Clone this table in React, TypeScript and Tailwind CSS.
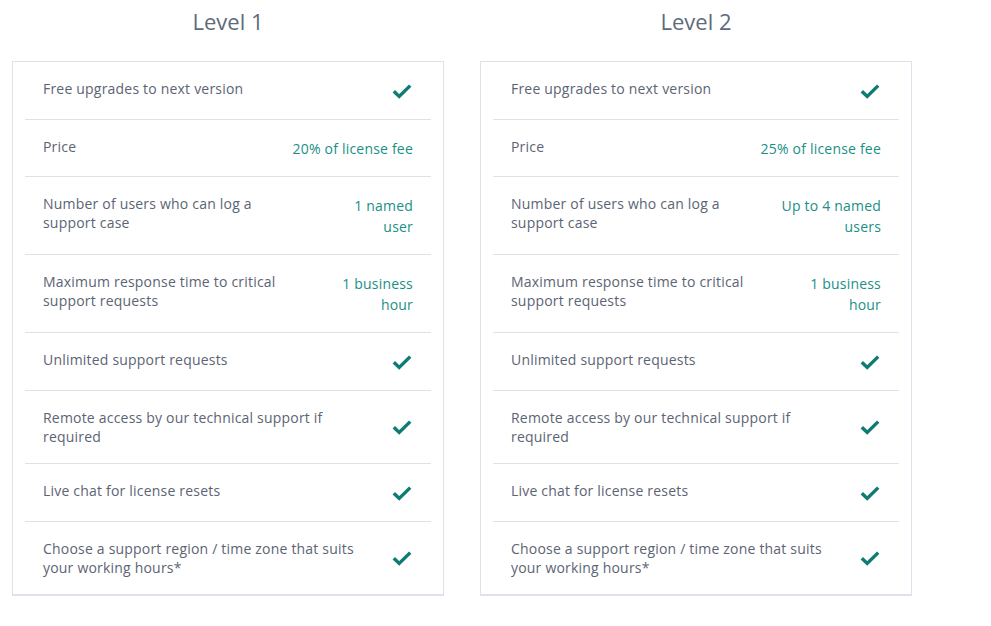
import React from "react";

type Row = {
  label: string[];
  value?: string[];
};

interface Plan {
  title: string;
  rows: Row[];
}

const plans: Plan[] = [
  {
    title: "Level 1",
    rows: [
      { label: ["Free upgrades to next version"] },
      { label: ["Price"], value: ["20% of license fee"] },
      { label: ["Number of users who can log a", "support case"], value: ["1 named", "user"] },
      { label: ["Maximum response time to critical", "support requests"], value: ["1 business", "hour"] },
      { label: ["Unlimited support requests"] },
      { label: ["Remote access by our technical support if", "required"] },
      { label: ["Live chat for license resets"] },
      { label: ["Choose a support region / time zone that suits", "your working hours*"] },
    ],
  },
  {
    title: "Level 2",
    rows: [
      { label: ["Free upgrades to next version"] },
      { label: ["Price"], value: ["25% of license fee"] },
      { label: ["Number of users who can log a", "support case"], value: ["Up to 4 named", "users"] },
      { label: ["Maximum response time to critical", "support requests"], value: ["1 business", "hour"] },
      { label: ["Unlimited support requests"] },
      { label: ["Remote access by our technical support if", "required"] },
      { label: ["Live chat for license resets"] },
      { label: ["Choose a support region / time zone that suits", "your working hours*"] },
    ],
  },
];

const Check = () => (
  <svg width="20" height="15" viewBox="0 0 20 15" fill="none">
    <path
      d="M1.8 7.2 L7.2 12.4 L18.2 1.6"
      stroke="#0e7c72"
      strokeWidth="3.4"
      strokeLinejoin="miter"
    />
  </svg>
);

const PlanCard: React.FC<{ plan: Plan }> = ({ plan }) => {
  return (
    <div className="w-[432px] shrink-0">
      <h2 className="text-center text-[22px] leading-[30px] text-[#5e6b7d] pt-[6px] mb-[25px]">
        {plan.title}
      </h2>
      <div className="border border-[#dfe2ea] border-b-2 bg-white px-3">
        {plan.rows.map((row, i) => (
          <div
            key={i}
            className={
              "flex justify-between gap-6 px-[18px] pt-[18px] pb-[17px] " +
              (i < plan.rows.length - 1 ? "border-b border-[#dde2ea]" : "")
            }
          >
            <div className="text-[14px] leading-[18.5px] tracking-[0.2px] text-[#5c6474]">
              {row.label.map((l, j) => (
                <div key={j} className="whitespace-nowrap">
                  {l}
                </div>
              ))}
            </div>
            {row.value ? (
              <div className="text-right text-[14px] leading-[21px] tracking-[0.2px] text-[#1a8f86]">
                {row.value.map((v, j) => (
                  <div key={j} className="whitespace-nowrap">
                    {v}
                  </div>
                ))}
              </div>
            ) : (
              <div className="flex items-center self-center h-[22px] pr-px">
                <Check />
              </div>
            )}
          </div>
        ))}
      </div>
    </div>
  );
};

export default function App() {
  return (
    <div
      className="w-[991px] h-[626px] bg-white"
      style={{ fontFamily: '"Open Sans", "Liberation Sans", sans-serif' }}
    >
      <div className="flex gap-9 pl-3">
        {plans.map((p) => (
          <PlanCard key={p.title} plan={p} />
        ))}
      </div>
    </div>
  );
}
